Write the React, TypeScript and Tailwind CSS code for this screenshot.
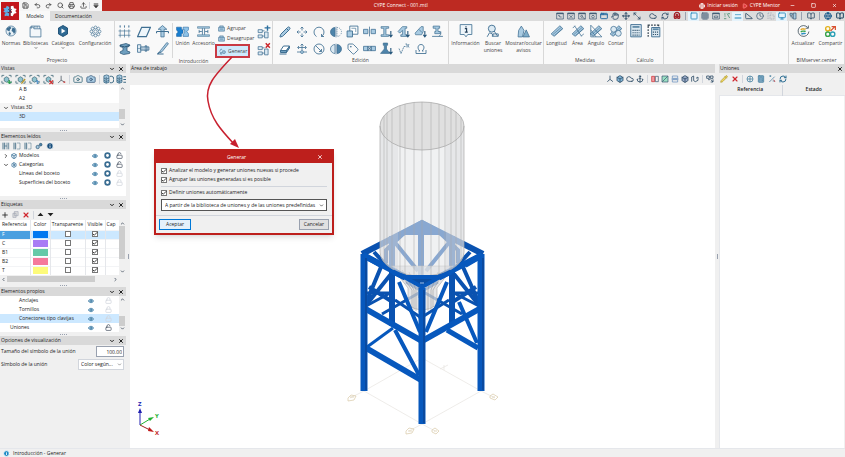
import { useState } from "react";
import type { ReactNode } from "react";
import {
  AppWindow, Anchor, BookOpen, Box, Calculator, Camera, Check, ChevronDown,
  ChevronRight, ChevronUp, Clock, Cloud, Eye, Globe, Grid3x3, Hand, Info, Lock,
  LockOpen, Magnet, Maximize2, Minus, Monitor, Move, Pencil, Play, Plus, Printer,
  RefreshCw, Save, Search, Settings, Square, Tag, TriangleRight,
  Undo2, Redo2, Upload, X,
} from "lucide-react";

type SvgProps = { className?: string; children: ReactNode };

const Svg = ({ className = "size-3", children }: SvgProps) => (
  <svg
    viewBox="0 0 24 24"
    className={`shrink-0 ${className}`}
    fill="none"
    stroke="currentColor"
    strokeWidth="2"
    aria-hidden="true"
  >
    {children}
  </svg>
);

const LIGHT = "#a9cbe2";

/* ---------- ribbon drawings ---------- */

const AppLogo = () => (
  <Svg className="size-[16px]">
    <path d="M2 8l4-1 1-3 4 2v4l1 2-1 2-3-1-2 2-4-2 2-2z M4 16l4-2 3 2-1 4-3-1-3 1z" fill="#5cb0e8" stroke="none" />
    <path d="M13 5l4-1 1 4 4 1-2 3 2 3-4 1-2 4-3-1v-4l2-2-2-3z" fill="#fff" stroke="none" />
    <path d="M12 4v16M9 9l6 6M15 9l-6 6" stroke="#1d3a5c" strokeWidth="1" />
  </Svg>
);

const UnionIcon = () => (
  <Svg className="size-[13px]">
    <path d="M1 4h9v4l3 1v6l-3 1v5H1v-5l3-3-3-4z" fill="#1a7fd0" stroke="#1a5f9c" strokeWidth="1" />
    <path d="M13 4h10v5l-3 3 3 4v5H13v-4l3-2V9l-3-1z" fill="#8fc3e8" stroke="#1a5f9c" strokeWidth="1" />
  </Svg>
);

const AccessoryIcon = () => (
  <Svg className="size-[13px]">
    <path d="M1 3h22v3H1z M1 18h22v3H1z" fill={LIGHT} strokeWidth="1" />
    <path d="M10 6v12M14 6v12M4 9v6M20 9v6M4 12h5M15 12h5" strokeWidth="1.5" />
  </Svg>
);

const FolderIcon = () => (
  <Svg className="size-[13px]">
    <path d="M2 4h6l1 3h13v15H2z M4 7V2h16v5" strokeWidth="1.4" fill="#f3f7fa" />
    <path d="M10 2v4M13 2v4M16 2v4" strokeWidth="1" />
  </Svg>
);

const CatalogIcon = () => (
  <Svg className="size-[12px]">
    <path d="M12 1l9 5v12l-9 5-9-5V6z" fill="#2f6a94" stroke="#24557a" />
    <path d="M9 7l8 5-8 5z" fill="#fff" stroke="none" />
  </Svg>
);

const GlobeIcon = () => (
  <Svg className="size-[12px]">
    <circle cx="12" cy="12" r="10" fill="#e8f1f7" strokeWidth="1.4" />
    <path d="M4 6l6-3 3 3-3 3-1 4-4-2-2-2z M8 14l4 2-2 5-3-3z M15 5l5 2 1 6-3 5-2-4-3-2z" fill="currentColor" stroke="none" />
  </Svg>
);

const GearFlower = () => (
  <Svg className="size-[13px]">
    <circle cx="12" cy="12" r="3" strokeWidth="1.2" />
    {[0, 45, 90, 135, 180, 225, 270, 315].map((a) => (
      <circle key={a} cx="12" cy="4.5" r="2.6" strokeWidth="1.2" transform={`rotate(${a} 12 12)`} />
    ))}
  </Svg>
);

const GridIcon = () => (
  <Svg className="size-[13px]">
    <path d="M4 8v15M12 8v15M20 8v15M1 11h22M1 19h22" strokeWidth="1.2" />
    <path d="M3 2h2M11 2h2M19 2h2M4 1v4M12 1v4M20 1v4" strokeWidth="1.4" />
  </Svg>
);

const PlaneIcon = () => (
  <Svg className="size-[14px]">
    <path d="M8 4h15l-7 16H1z" fill="#eef6fb" strokeWidth="2" />
  </Svg>
);

const ColumnArrow = () => (
  <Svg className="size-[13px]">
    <path d="M12 1l8 7h-5v14h-6V8H4z" fill={LIGHT} strokeWidth="1.4" />
    <path d="M1 12h22M1 12v3M23 12v3" />
  </Svg>
);

const BeamIcon = () => (
  <Svg className="size-[12px]">
    <path d="M2 4l12-3 8 3-2 3-4 1v8l6 2-1 3-12 2-7-3 1-3 5-2V9L2 7z" fill="#6f9fbf" stroke="#2c5675" strokeWidth="1.5" />
    <path d="M2 5l9 3 10-3" stroke="#2c5675" />
  </Svg>
);

const BoltIcon = () => (
  <Svg className="size-[13px]">
    <path d="M1 5h6v14H1z M7 9h15v6H7z M15 7h3v10h-3z" fill="#e2edf5" strokeWidth="1.5" />
    <path d="M1 12h6M11 9v6M20 9v6" strokeWidth="1" />
  </Svg>
);

const PenCorner = () => (
  <Svg className="size-[13px]">
    <path d="M20 1l3 2-12 15-4 2 1-4z" fill={LIGHT} strokeWidth="1.4" />
    <path d="M2 22h12M3 22l4-4" />
  </Svg>
);

const TinyGroup = () => (
  <Svg className="size-[7px] text-[#3f6f92]">
    <path d="M2 8h20v13H2z M6 8V3h12v5 M7 14h10" fill={LIGHT} />
  </Svg>
);

const GenerateIcon = () => (
  <Svg className="size-[7px] text-[#3f6f92]">
    <path d="M2 12l5-9 5 5M5 15h5v6H5z" />
    <circle cx="17" cy="14" r="5" fill={LIGHT} />
  </Svg>
);

const JointIcon = ({ remove = false }: { remove?: boolean }) => (
  <Svg className="size-[14px]">
    <path d="M2 8h7v5H2z M2 17h7v5H2z M13 12h6v10h-6z M9 10h4M9 19h4" fill="#dceaf3" strokeWidth="1.3" />
    {remove ? (
      <path d="M15 2l7 8M22 2l-7 8" stroke="#c9252b" strokeWidth="2.4" />
    ) : (
      <path d="M18 1v9M13 5h10" stroke="#2c6f9e" strokeWidth="2.4" />
    )}
  </Svg>
);

const EraserIcon = () => (
  <Svg className="size-[12px]">
    <path d="M9 6h12l-6 9H3z" fill="#fff" />
    <path d="M3 15h12v4H3z M15 15l6-9v4l-6 9z" fill="#6f9fbf" />
    <path d="M1 22h14" />
  </Svg>
);

const MoveIcon = () => (
  <Svg className="size-[12px]">
    <path d="M12 9V2M9 5l3-3 3 3M12 15v7M9 19l3 3 3-3M9 12H2M5 9l-3 3 3 3M15 12h7M19 9l3 3-3 3" strokeWidth="1.6" />
  </Svg>
);

const MoveNode = () => (
  <Svg className="size-[12px]">
    <path d="M12 14V2M9 5l3-3 3 3M12 9H4M6 6L3 9l3 3M12 9h8M18 6l3 3-3 3M2 18h7M15 18h7" strokeWidth="1.6" />
    <circle cx="12" cy="18" r="3" fill={LIGHT} strokeWidth="1.4" />
  </Svg>
);

const RotateIcon = () => (
  <Svg className="size-[12px]">
    <path d="M7 21a10 10 0 1 1 10 0M17 16v5h5" strokeWidth="1.7" />
  </Svg>
);

const RadiusIcon = () => (
  <Svg className="size-[12px]">
    <circle cx="12" cy="12" r="10" strokeWidth="1.7" />
    <path d="M5 5l12 12M17 12v5h-5" strokeWidth="1.7" />
  </Svg>
);

const MirrorIcon = ({ dashed = false }: { dashed?: boolean }) => (
  <Svg className="size-[12px]">
    <path d="M10 3a9 9 0 0 0 0 18z" fill={dashed ? "#4e84aa" : "#dceaf3"} strokeWidth="1.4" />
    <path d="M14 3a9 9 0 0 1 0 18z" fill={dashed ? "none" : "#4e84aa"} strokeWidth="1.4" strokeDasharray={dashed ? "2 2" : undefined} />
    <path d="M12 1v22" strokeWidth="1" />
  </Svg>
);

const CopyIcon = () => (
  <Svg className="size-[13px]">
    <path d="M7 2h15v15H7z" fill="#fff" strokeWidth="1.6" />
    <path d="M2 11h10v11H2z" fill={LIGHT} strokeWidth="1.6" />
    <path d="M10 6h8v7" strokeWidth="1.2" />
  </Svg>
);

const SplitIcon = ({ joined = false }: { joined?: boolean }) => (
  <Svg className="size-[13px]">
    <path d="M1 8h8v8H1z M15 8h8v8h-8z" fill={LIGHT} strokeWidth="1.4" />
    <path d={joined ? "M9 8h6v8H9zM9 8l6 8M15 8l-6 8" : "M12 3v18"} strokeWidth="1.4" />
  </Svg>
);

const ProfileIcon = ({ variant = 0 }: { variant?: number }) => (
  <Svg className="size-[13px]">
    {variant === 0 && <path d="M2 3h14v3h-5v12h5v3H2v-3h5V6H2z" fill={LIGHT} strokeWidth="1.3" />}
    {variant === 1 && <path d="M2 12l8-9h8v3h-3v12h3v3H7v-3h3v-8l-5 5z" fill={LIGHT} strokeWidth="1.3" />}
    {variant === 2 && <path d="M2 15L13 3h4v9l-3 6H3z M9 8l6 6" fill={LIGHT} strokeWidth="1.3" />}
    {variant === 3 && <path d="M4 2h12v4h-3v6h4v4H7v-4h2V6H4z" fill={LIGHT} strokeWidth="1.3" />}
    {variant === 4 && <path d="M6 2h8v4h-2v7l6 8H1l7-8V6H6z" fill="#4e84aa" strokeWidth="1.3" />}
    {variant === 3 ? (
      <path d="M2 21h20M18 12v5l-3 4" strokeWidth="1.5" />
    ) : (
      <path d="M20 11v11M17 18l3 4 3-4" stroke="#24557a" strokeWidth="2" />
    )}
  </Svg>
);

const WeldIcon = () => (
  <Svg className="size-[12px]">
    <path d="M2 11l4 10 6-14h3" strokeWidth="1.5" strokeDasharray="4 1" />
    <path d="M15 2h3v7M22 2l-2 4 2 3" strokeWidth="1.5" />
  </Svg>
);

const OmegaIcon = () => (
  <Svg className="size-[12px]">
    <path d="M2 14v7h20v-7M7 16h3c-6-4-5-13 2-13s8 9 2 13h3" strokeWidth="1.7" />
  </Svg>
);

const InfoBubble = () => (
  <Svg className="size-[14px]">
    <path d="M2 1h20v17h-7l-3 4-3-4H2z" strokeWidth="1.4" fill="#eef5fa" />
    <path d="M10 8h3v6M10 14h5M11 5h2" stroke="#24405a" strokeWidth="2" />
  </Svg>
);

const FindIcon = () => (
  <Svg className="size-[14px]">
    <circle cx="10" cy="8" r="6" fill="#dceaf3" strokeWidth="1.6" />
    <path d="M14 12l6 9M2 22l4-7 5 2v5M12 17h9v4h-9z" strokeWidth="1.5" />
  </Svg>
);

const WarnIcon = () => (
  <Svg className="size-[13px]">
    <path d="M8 2l5 8-3 12H2l1-12z" fill={LIGHT} strokeWidth="1.4" />
    <path d="M17 9l6 13H11z" fill="#7fadc9" strokeWidth="1.4" />
  </Svg>
);

const RulerIcon = ({ variant }: { variant: number }) => (
  <Svg className="size-[14px]">
    <path d="M2 17L17 3l5 5L7 21z" fill={LIGHT} strokeWidth="1.3" />
    <path d="M5 18L19 6M8 20L21 8" strokeWidth="1" />
    {variant === 1 && <path d="M6 3l12 18M3 7l4-4M17 21l5-4" strokeWidth="1.3" />}
    {variant === 2 && <path d="M3 2v20h19zM3 10l9 12" strokeWidth="1.3" />}
    {variant === 3 && (
      <>
        <circle cx="8" cy="9" r="5" fill="#dceaf3" strokeWidth="1.3" />
        <circle cx="16" cy="16" r="5" fill="#dceaf3" strokeWidth="1.3" />
      </>
    )}
  </Svg>
);

const CalcIcon = ({ frame = false }: { frame?: boolean }) => (
  <Svg className="size-[14px]">
    {frame && <path d="M2 4v18M2 2h18M2 1v3M20 1v3" stroke="#33414d" strokeDasharray="3 2" />}
    <path d={frame ? "M8 6h14v16H8z" : "M3 1h18v21H3z"} fill="#dbe8f1" strokeWidth="1.6" />
    <path d={frame ? "M10 9h10" : "M6 5h12"} stroke="#5c88a6" strokeWidth="3" />
    <path d={frame ? "M10 14h10M10 18h10" : "M6 11h12M6 15h12M6 19h12"} stroke="#33556e" strokeDasharray="2 1.5" />
  </Svg>
);

const SyncColor = () => (
  <Svg className="size-[13px]">
    <path d="M20 5A10 10 0 1 0 22 12M21 1v5h-5" stroke="#3d4d59" strokeWidth="1.5" />
    <path d="M7 9c3-4 6 0 9-2" stroke="#e3a21a" strokeWidth="2.5" />
    <path d="M7 13c3-4 6 0 9-2" stroke="#37a34a" strokeWidth="2.5" />
    <path d="M8 17c3-3 6 0 8-2" stroke="#2a8fc4" strokeWidth="2.5" />
  </Svg>
);

const ShareColor = () => (
  <Svg className="size-[13px]">
    <circle cx="7" cy="7" r="4" stroke="#e3b01a" strokeWidth="2.5" />
    <circle cx="7" cy="17" r="4" stroke="#37a34a" strokeWidth="2.5" />
    <circle cx="16" cy="17" r="4" stroke="#2a9fb4" strokeWidth="2.5" />
    <path d="M12 11l8-8M14 3h7v6" stroke="#d8502f" strokeWidth="2.2" />
  </Svg>
);

/* ---------- panel drawings ---------- */

const ViewIcon = ({ badge }: { badge: string }) => (
  <Svg className="size-[11px] text-[#35606f]">
    <path d="M2 7V3h5M17 3h5v4M22 15v5h-4M7 20H2v-5" strokeWidth="1.6" />
    <path d="M7 9l5-3 5 3v6l-5 3-5-3z" fill="#8fc3cf" strokeWidth="1.4" />
    {badge === "add" && <path d="M18 13v9M14 18h9" stroke="#22a04a" strokeWidth="2.6" />}
    {badge === "edit" && <path d="M22 11l-8 10" stroke="#b3962a" strokeWidth="3" />}
    {badge === "up" && <path d="M18 22v-7M15 17l3-3 3 3" stroke="#2c7bc0" strokeWidth="2" />}
    {badge === "del" && <path d="M14 14l8 8M22 14l-8 8" stroke="#d42a2a" strokeWidth="2.6" />}
  </Svg>
);

const AxesIcon = () => (
  <Svg className="size-[9px] text-[#44535e]">
    <path d="M11 2v12L3 21M11 14l10 5" strokeWidth="2" />
    <path d="M17 19h5" stroke="#d42a2a" strokeWidth="3" />
  </Svg>
);

const LayersIcon = () => (
  <Svg className="size-[11px] text-[#2f5f7c]">
    <path d="M2 4l6-2 5 2v14l-6 2-5-2zM2 9l5 2 6-2M2 14l5 2 6-2M7 6v14" strokeWidth="1.6" fill={LIGHT} />
    <path d="M15 5h4a4 6 0 0 1 0 14h-4" />
  </Svg>
);

const LayersListIcon = () => (
  <Svg className="size-[11px] text-[#2f5f7c]">
    <path d="M2 4l6-2 5 2v14l-6 2-5-2zM2 9l5 2 6-2M2 14l5 2 6-2M7 6v14" strokeWidth="1.6" fill={LIGHT} />
    <path d="M16 6h6M16 12h6M16 18h6" />
  </Svg>
);

const ReadIcon = ({ arrow = false }: { arrow?: boolean }) => (
  <Svg className="size-[8px] text-[#33607c]">
    <path d="M3 2v20M8 2v20" strokeWidth="2.5" />
    <path d={arrow ? "M13 3h8v18h-8" : "M15 2v20M20 2v20M8 12h7"} strokeDasharray={arrow ? "4 2" : undefined} />
  </Svg>
);

const LinkIcon = () => (
  <Svg className="size-[8px] text-[#234f6e]">
    <circle cx="8" cy="15" r="5" fill={LIGHT} />
    <circle cx="17" cy="8" r="4" fill="#4e84aa" />
  </Svg>
);

const Ring = () => (
  <Svg className="size-[7px] text-[#3a6d92]">
    <circle cx="12" cy="12" r="8" strokeWidth="6" fill="#fff" />
  </Svg>
);

const PanelHead = ({ title, closeOnly = false }: { title: string; closeOnly?: boolean }) => (
  <div className="flex h-[9px] shrink-0 items-center bg-[#d9d9d9] pl-px pr-px">
    <h2 className="flex-1 truncate">{title}</h2>
    {!closeOnly && (
      <button aria-label={`Contraer ${title}`} className="px-[2px]">
        <ChevronDown className="size-[6px]" strokeWidth={4} />
      </button>
    )}
    <button aria-label={`Cerrar ${title}`} className="px-px">
      <X className="size-[6px]" strokeWidth={4} />
    </button>
  </div>
);

const Dots = () => (
  <div className="flex h-[4px] shrink-0 items-center justify-center gap-px">
    {[0, 1, 2, 3].map((i) => (
      <span key={i} className="size-px bg-gray-400" />
    ))}
  </div>
);

const VScroll = ({ thumb, size = "h-[10px]" }: { thumb: string; size?: string }) => (
  <div className="flex w-[7px] shrink-0 flex-col items-center bg-[#f0f0f0] py-px text-gray-600">
    <ChevronUp className="size-[5px]" strokeWidth={4} />
    <div className={`flex flex-1 flex-col self-stretch ${thumb}`}>
      <span className={`w-[6px] bg-[#cdcdcd] ${size}`} />
    </div>
    <ChevronDown className="size-[5px]" strokeWidth={4} />
  </div>
);

const Tick = ({ on = true, label }: { on?: boolean; label?: string }) => {
  const [checked, setChecked] = useState(on);
  return (
    <label className="inline-flex items-center gap-[2px]">
      <span className="relative inline-flex size-[6px]">
        <input
          type="checkbox"
          aria-label={label ? undefined : "Activar"}
          checked={checked}
          onChange={(e) => setChecked(e.target.checked)}
          className="size-[6px] appearance-none border border-[#777] bg-white"
        />
        {checked && (
          <Check className="pointer-events-none absolute inset-0 size-[6px] text-black" strokeWidth={3} />
        )}
      </span>
      {label}
    </label>
  );
};

const TreeRow = ({
  name, pad, active = false, children,
}: { name: ReactNode; pad: string; active?: boolean; children?: ReactNode }) => (
  <li className={`flex h-[9px] items-center ${pad} ${active ? "bg-[#cce8ff]" : ""}`}>
    <span className="flex flex-1 items-center gap-[2px] whitespace-nowrap">{name}</span>
    {children}
  </li>
);

const EyeLock = ({ ring = false, open = false }: { ring?: boolean; open?: boolean }) => (
  <span className="flex items-center">
    <span className="flex w-[12px] justify-center">
      <Eye className="size-[6px] text-[#3f7aa0]" fill={LIGHT} strokeWidth={3} />
    </span>
    {ring && (
      <span className="flex w-[12px] justify-center">
        <Ring />
      </span>
    )}
    <span className={`flex justify-center ${ring ? "w-[13px]" : "w-[22px]"}`}>
      {open ? (
        <LockOpen className="size-[7px] text-gray-600" strokeWidth={2.5} />
      ) : (
        <Lock className="size-[7px] text-gray-300" strokeWidth={2.5} />
      )}
    </span>
  </span>
);

/* ---------- ribbon pieces ---------- */

const BigButton = ({
  icon, label, width, caret = false,
}: { icon: ReactNode; label: string; width: string; caret?: boolean }) => (
  <button className={`flex shrink-0 flex-col items-center ${width}`}>
    <span className="flex h-[16px] items-center text-[#3f6f92]">{icon}</span>
    <span className="mt-px whitespace-pre text-center leading-[7px]">{label}</span>
    {caret && <ChevronDown className="-mt-px size-[4px]" strokeWidth={4} />}
  </button>
);

const Group = ({
  title = "", width, children, className = "",
}: { title?: string; width: string; children: ReactNode; className?: string }) => (
  <section className={`flex shrink-0 flex-col border-r border-[#d8d8d8] ${width} ${className}`}>
    <div className="flex flex-1 pt-[2px]">{children}</div>
    <h3 className="h-[7px] text-center leading-[7px]">{title}</h3>
  </section>
);

const editTools: ReactNode[] = [
  <Pencil className="size-[12px]" fill={LIGHT} strokeWidth={2} />,
  <MoveIcon />, <RotateIcon />, <MirrorIcon dashed />, <CopyIcon />, <SplitIcon />,
  <ProfileIcon />, <ProfileIcon variant={1} />, <ProfileIcon variant={2} />, <ProfileIcon variant={3} />,
  <EraserIcon />, <MoveNode />, <RadiusIcon />, <MirrorIcon />,
  <Tag className="size-[12px]" strokeWidth={1.7} />,
  <SplitIcon joined />, <ProfileIcon variant={4} />, <WeldIcon />, <OmegaIcon />,
];

const ZoomWindow = ({ d }: { d: string }) => (
  <Svg className="size-[8px]">
    <path d="M2 3h20v18H2z" />
    <path d="M2 5h20" strokeWidth="3" />
    <path d={d} />
  </Svg>
);

const viewTools: ReactNode[] = [
  <ZoomWindow d="M6 11h5v4M11 15h6" />,
  <ZoomWindow d="M7 10l10 8M17 10l-10 8" />,
  <ZoomWindow d="M13 14l8 8M8 13a3 3 0 1 0 6 0 3 3 0 1 0-6 0" />,
  <ZoomWindow d="M8 14a4 4 0 1 0 8 0 4 4 0 1 0-8 0" />,
  <AppWindow className="size-[8px] text-[#2c6fa3]" strokeWidth={3} />,
  <Hand className="size-[8px]" strokeWidth={2.5} />,
  <Move className="size-[8px]" strokeWidth={3} />,
  <Maximize2 className="size-[8px] -scale-x-100" strokeWidth={2.5} />,
];

const snapTools: { icon: ReactNode; on?: boolean }[] = [
  { icon: <Square className="size-[8px]" strokeWidth={2.5} />, on: true },
  { icon: <Grid3x3 className="size-[8px]" strokeWidth={2} /> },
  { icon: <ZoomWindow d="M7 12h10v5H7z" /> },
  { icon: <Svg className="size-[8px] text-[#2f7d5c]"><path d="M3 6h5M12 4l8 14M4 12h4M3 20h7M15 5h6" /></Svg> },
  { icon: <Svg className="size-[8px]"><path d="M2 18h20M4 8h4M10 8h4M16 8h4" strokeWidth="3" /></Svg>, on: true },
  { icon: <TriangleRight className="size-[8px] -scale-x-100" strokeWidth={2.5} /> },
  { icon: <Clock className="size-[8px]" strokeWidth={2} /> },
  { icon: <Svg className="size-[8px] text-gray-400"><path d="M3 3h12M3 3v18M9 9h12v12H9z" strokeDasharray="3 2" /></Svg> },
  { icon: <Monitor className="size-[8px]" strokeWidth={2.5} />, on: true },
  { icon: <Svg className="size-[8px]"><path d="M3 4h7v6H3zM13 3h8v18h-8zM4 14h6v6" fill={LIGHT} /></Svg> },
];

const quickTools = [Save, Undo2, Redo2, Search, Printer, Upload];

const TitleBar = () => (
  <header className="flex h-[21px] shrink-0">
    <div className="flex w-[20px] items-center justify-center bg-[#f5f5f5]">
      <div className="flex size-[18px] items-center justify-center bg-[#c3161c]">
        <AppLogo />
      </div>
    </div>
    <div className="flex flex-1 flex-col">
      <div className="flex h-[11px]">
        <div className="flex w-[82px] items-center bg-[#f5f5f5] text-[#3a3a3a]">
          <div className="flex flex-1">
            {quickTools.map((Tool, i) => (
              <button key={i} aria-label="Acceso rápido" className="flex flex-1 justify-center">
                <Tool className="size-[7px]" strokeWidth={2.5} />
              </button>
            ))}
          </div>
          <span className="h-[7px] w-px bg-gray-300" />
          <button aria-label="Personalizar" className="px-[3px]">
            <Svg className="size-[6px]">
              <path d="M3 4h18" strokeWidth="4" />
              <path d="M3 10h18l-9 10z" fill="currentColor" />
            </Svg>
          </button>
        </div>
        <div className="flex flex-1 items-center bg-[#bd2a22] text-white">
          <h1 className="flex-1 text-center">CYPE Connect - 001.mtl</h1>
          <a href="#sesion" className="flex items-center gap-[2px]">
            <Globe className="size-[6px]" strokeWidth={3} /> Iniciar sesión
          </a>
          <a href="#mentor" className="ml-[4px] flex items-center gap-[2px]">
            <Play className="size-[6px] text-[#ff8a80]" fill="#e0393e" strokeWidth={3} /> CYPE Mentor
          </a>
          <div className="ml-[2px] flex">
            {[Minus, Square, X].map((Ctl, i) => (
              <button key={i} aria-label="Ventana" className="flex w-[21px] justify-center">
                <Ctl className="size-[5px]" strokeWidth={3} />
              </button>
            ))}
          </div>
        </div>
      </div>
      <nav className="flex h-[10px] items-center bg-[#dcdcdc]">
        <a href="#modelo" className="flex h-full w-[30px] items-center justify-center bg-[#f9f9f9]">
          Modelo
        </a>
        <a href="#documentacion" className="px-[5px]">Documentación</a>
        <div className="ml-auto flex items-center text-[#33506a]">
          {viewTools.map((tool, i) => (
            <button key={i} aria-label="Vista" className="flex w-[11px] justify-center">{tool}</button>
          ))}
          <button aria-label="Capas" className="ml-[5px] flex w-[12px] justify-center">
            <Cloud className="size-[8px]" strokeWidth={2.5} />
          </button>
          <button aria-label="Refrescar" className="flex w-[12px] justify-center">
            <RefreshCw className="size-[8px]" strokeWidth={2.5} />
          </button>
          <button aria-label="Imán" className="flex w-[12px] justify-center">
            <Magnet className="size-[8px] -rotate-45 text-[#a3242a]" strokeWidth={4} />
          </button>
          <span className="mx-[2px] h-[8px] w-px bg-gray-400" />
          {snapTools.map((tool, i) => (
            <button
              key={i}
              aria-label="Referencia"
              className={`flex h-[9px] w-[11px] items-center justify-center ${tool.on ? "bg-[#e6f3fb] text-[#2385b8]" : ""}`}
            >
              {tool.icon}
            </button>
          ))}
          <span className="mx-[3px] h-[8px] w-px bg-gray-400" />
          <button aria-label="Ayuda" className="flex w-[12px] justify-center">
            <BookOpen className="size-[8px]" strokeWidth={2.5} />
          </button>
          <span className="mx-[2px] h-[8px] w-px bg-gray-400" />
          <button aria-label="Web" className="flex w-[12px] justify-center">
            <Globe className="size-[8px] text-[#1d5c8c]" strokeWidth={3} />
          </button>
          <button aria-label="Manual" className="flex w-[11px] justify-center">
            <BookOpen className="size-[8px] text-[#17405f]" strokeWidth={3} />
          </button>
        </div>
      </nav>
    </div>
  </header>
);

const Ribbon = () => (
  <div className="flex h-[43px] shrink-0 bg-[#f9f9f9] text-[#444]">
    <Group title="Proyecto" width="w-[115px]">
      <BigButton icon={<GlobeIcon />} label="Normas" width="w-[22px]" />
      <BigButton icon={<FolderIcon />} label="Bibliotecas" width="w-[27px]" caret />
      <BigButton icon={<CatalogIcon />} label="Catálogos" width="w-[28px]" caret />
      <BigButton icon={<GearFlower />} label="Configuración" width="w-[36px]" />
    </Group>
    <Group title="Introducción" width="w-[158px]">
      <div className="grid w-[58px] shrink-0 grid-cols-3 grid-rows-[17px_17px] items-center justify-items-center border-r border-[#d8d8d8] text-[#3f6f92]">
        <button aria-label="Rejilla"><GridIcon /></button>
        <button aria-label="Plano"><PlaneIcon /></button>
        <button aria-label="Pilar"><ColumnArrow /></button>
        <button aria-label="Perfil"><BeamIcon /></button>
        <button aria-label="Tornillo"><BoltIcon /></button>
        <button aria-label="Soldadura"><PenCorner /></button>
      </div>
      <BigButton icon={<UnionIcon />} label="Unión" width="w-[19px]" />
      <BigButton icon={<AccessoryIcon />} label="Accesorio" width="w-[23px]" />
      <div className="flex w-[40px] shrink-0 flex-col items-start">
        <button className="ml-[3px] flex h-[10px] items-center gap-[2px]"><TinyGroup />Agrupar</button>
        <button className="ml-[3px] flex h-[11px] items-center gap-[2px]"><TinyGroup />Desagrupar</button>
        <button className="flex h-[14px] w-[35px] items-center gap-[2px] border-2 border-[#c93a44] bg-[#cfeafc] px-[2px]">
          <GenerateIcon />Generar
        </button>
      </div>
      <div className="grid grid-rows-[17px_17px] items-center pl-[2px] text-[#3f6f92]">
        <button aria-label="Añadir a la unión"><JointIcon /></button>
        <button aria-label="Quitar de la unión"><JointIcon remove /></button>
      </div>
    </Group>
    <Group title="Edición" width="w-[176px]">
      <div className="grid grid-cols-[repeat(10,17px)] grid-rows-[17px_17px] items-center justify-items-center pl-[3px] text-[#3f6f92]">
        {editTools.map((tool, i) => (
          <button key={i} aria-label="Herramienta de edición">{tool}</button>
        ))}
      </div>
    </Group>
    <Group width="w-[95px]">
      <BigButton icon={<InfoBubble />} label="Información" width="w-[33px]" />
      <BigButton icon={<FindIcon />} label={"Buscar\nuniones"} width="w-[22px]" />
      <BigButton icon={<WarnIcon />} label={"Mostrar/ocultar\navisos"} width="w-[39px]" />
    </Group>
    <Group title="Medidas" width="w-[83px]">
      <BigButton icon={<RulerIcon variant={0} />} label="Longitud" width="w-[25px]" />
      <BigButton icon={<RulerIcon variant={1} />} label="Área" width="w-[17px]" />
      <BigButton icon={<RulerIcon variant={2} />} label="Ángulo" width="w-[20px]" />
      <BigButton icon={<RulerIcon variant={3} />} label="Contar" width="w-[20px]" />
    </Group>
    <Group title="Cálculo" width="w-[37px]">
      <BigButton icon={<CalcIcon />} label="" width="w-[18px]" />
      <BigButton icon={<CalcIcon frame />} label="" width="w-[17px]" />
    </Group>
    <div className="flex-1 border-r border-[#d8d8d8]" />
    <Group title="BIMserver.center" width="w-[56px]">
      <BigButton icon={<SyncColor />} label="Actualizar" width="w-[28px]" />
      <BigButton icon={<ShareColor />} label="Compartir" width="w-[27px]" />
    </Group>
  </div>
);

/* ---------- left side ---------- */

const labels = [
  { ref: "F", color: "bg-[#0078f0]", active: true },
  { ref: "C", color: "bg-[#a97cf5]" },
  { ref: "B1", color: "bg-[#66c9a8]" },
  { ref: "B2", color: "bg-[#f5799b]" },
  { ref: "T", color: "bg-[#fdfb7a]" },
];

const LeftSide = () => (
  <aside className="flex w-[126px] shrink-0 flex-col bg-[#f0f0f0]">
    <PanelHead title="Vistas" />
    <div className="flex h-[12px] items-center gap-[3px] pl-px">
      <ViewIcon badge="add" />
      <ViewIcon badge="edit" />
      <ViewIcon badge="up" />
      <ViewIcon badge="del" />
      <AxesIcon />
      <span className="h-[9px] w-px bg-gray-300" />
      <Camera className="size-[10px] shrink-0 text-[#3f6f7f]" />
      <Camera className="size-[10px] shrink-0 text-[#3f5f7f]" fill={LIGHT} />
      <span className="h-[9px] w-px bg-gray-300" />
      <div className="flex gap-[2px] overflow-hidden">
        <LayersIcon />
        <LayersListIcon />
      </div>
    </div>
    <div className="flex h-[43px] bg-white">
      <ul className="flex-1">
        <TreeRow name="A B" pad="pl-[19px]" />
        <TreeRow name="A2" pad="pl-[19px]" />
        <li className="bg-[#f5f5f5]">
          <ul>
            <TreeRow name={<><ChevronDown className="size-[6px]" strokeWidth={3} />Vistas 3D</>} pad="pl-[3px]" />
          </ul>
        </li>
        <TreeRow name="3D" pad="pl-[19px]" active />
      </ul>
      <VScroll thumb="justify-end pb-[3px]" />
    </div>
    <Dots />

    <PanelHead title="Elementos leídos" />
    <div className="flex h-[10px] items-center gap-[3px] pl-[2px]">
      <ReadIcon />
      <ReadIcon arrow />
      <ReadIcon arrow />
      <LinkIcon />
      <Info className="size-[8px] text-white" fill="#174e7c" strokeWidth={2.5} />
    </div>
    <ul className="h-[45px] bg-white">
      <TreeRow
        name={<><ChevronRight className="size-[6px]" strokeWidth={3} /><Box className="size-[6px] text-[#2f6a94]" strokeWidth={3} />Modelos</>}
        pad="pl-[3px]"
      >
        <EyeLock ring open />
      </TreeRow>
      <TreeRow
        name={<><ChevronDown className="size-[6px]" strokeWidth={3} /><Settings className="size-[6px] text-[#2f6a94]" strokeWidth={3} />Categorías</>}
        pad="pl-[3px]"
      >
        <EyeLock ring open />
      </TreeRow>
      <TreeRow name="Líneas del boceto" pad="pl-[19px]"><EyeLock ring /></TreeRow>
      <TreeRow name="Superficies del boceto" pad="pl-[19px]"><EyeLock ring /></TreeRow>
    </ul>
    <Dots />

    <PanelHead title="Etiquetas" />
    <div className="flex h-[11px] items-center gap-[3px] pl-px">
      <Plus className="size-[8px]" strokeWidth={2.5} />
      <Svg className="size-[7px] text-gray-400">
        <path d="M8 2h13v14H8zM3 8h11v14H3z" fill="#ddd" />
      </Svg>
      <X className="size-[8px] text-[#d0282e]" strokeWidth={3.5} />
      <span className="h-[8px] w-px bg-gray-300" />
      <Svg className="size-[7px]"><path d="M2 17h20L12 6z" fill="currentColor" stroke="none" /></Svg>
      <Svg className="size-[7px]"><path d="M2 7h20L12 18z" fill="currentColor" stroke="none" /></Svg>
    </div>
    <div className="flex bg-white">
      <table className="flex-1 table-fixed border-collapse">
        <thead>
          <tr className="h-[10px]">
            <th className="w-[30px] border-r border-gray-200 pl-[2px] text-left font-normal">Referencia</th>
            <th className="w-[20px] border-r border-gray-200 font-normal">Color</th>
            <th className="w-[35px] border-r border-gray-200 font-normal">Transparente</th>
            <th className="w-[20px] border-r border-gray-200 font-normal">Visible</th>
            <th className="pl-px text-left font-normal">Cap</th>
          </tr>
        </thead>
        <tbody>
          {labels.map((row) => (
            <tr key={row.ref} className={`h-[9px] border-t border-gray-100 ${row.active ? "bg-[#cce8ff]" : ""}`}>
              <td className={`border-r border-gray-200 pl-[2px] ${row.active ? "bg-[#4a9fe0] text-white" : ""}`}>{row.ref}</td>
              <td className="border-r border-gray-200 px-[2px]"><span className={`block h-[7px] ${row.color}`} /></td>
              <td className="border-r border-gray-200 text-center leading-none"><Tick on={false} /></td>
              <td className="border-r border-gray-200 text-center leading-none"><Tick /></td>
              <td />
            </tr>
          ))}
        </tbody>
      </table>
      <VScroll thumb="justify-start" size="h-[33px]" />
    </div>
    <div className="flex h-[8px] items-center px-px text-gray-600">
      <ChevronRight className="size-[5px] rotate-180" strokeWidth={4} />
      <span className="mx-px h-[6px] w-[88px] bg-[#cdcdcd]" />
      <ChevronRight className="ml-auto mr-[7px] size-[5px]" strokeWidth={4} />
    </div>
    <Dots />

    <PanelHead title="Elementos propios" />
    <div className="flex h-[36px] bg-white">
      <ul className="flex-1">
        <TreeRow name="Anclajes" pad="pl-[19px]"><EyeLock /></TreeRow>
        <TreeRow name="Tornillos" pad="pl-[19px]"><EyeLock /></TreeRow>
        <TreeRow name="Conectores tipo clavijas" pad="pl-[19px]" active><EyeLock /></TreeRow>
        <TreeRow name="Uniones" pad="pl-[10px]"><EyeLock open /></TreeRow>
      </ul>
      <VScroll thumb="justify-end" />
    </div>
    <Dots />

    <PanelHead title="Opciones de visualización" />
    <div className="flex flex-col gap-[2px] pl-px pr-[2px] pt-px">
      <label className="flex items-center justify-between">
        Tamaño del símbolo de la unión
        <input defaultValue="100.00" className="h-[11px] w-[28px] border border-gray-400 bg-white pr-px text-right" />
      </label>
      <label className="flex items-center justify-between">
        Símbolo de la unión
        <span className="relative flex items-center">
          <select className="h-[11px] w-[46px] appearance-none border border-gray-300 bg-white pl-[2px]">
            <option>Color según...</option>
          </select>
          <ChevronDown className="pointer-events-none absolute right-[2px] size-[5px]" />
        </span>
      </label>
    </div>
  </aside>
);

/* ---------- 3D view ---------- */

const staves = [384, 387, 392, 400, 405, 414, 422, 431, 439, 445, 451, 456, 461];

const staveEnds = (x: number) => {
  const dy = 24 * Math.sqrt(1 - ((x - 422) / 42) ** 2);
  return { top: 126 - dy, bottom: 252 + dy };
};

const Tower = () => (
  <svg viewBox="342 85 160 363" className="h-[363px] w-[160px]" fill="none" role="img" aria-label="Modelo 3D">
    {/* ground outline and support tags */}
    <g stroke="#e6e4e0" strokeWidth="0.7">
      <path d="M350 398l14-7 58-33 59 33 14 7M364 391l58 33 59-33M422 424l-13 7M422 424l13 7" />
      <path d="M440 369l8-4M444 365v5" />
    </g>
    <g stroke="#d9c9a6" strokeWidth="0.7">
      <path d="M348 398l3-3 5 1-2 4-6 1zM406 431l3-3 5 1-2 4-6 1zM432 430l3-2 4 3-3 3-4-2zM490 396l3-2 5 3-3 3-5-2z" />
      <path d="M350 397h4M408 431h4M434 431h3M492 397h3" />
    </g>

    {/* rear members */}
    <g stroke="#0a52b0">
      <path d="M421 226v72" strokeWidth="6" />
      <path d="M392 236v90M452 236v90" strokeWidth="6" />
      <path d="M366 306l26-14M479 306l-27-14M382 314l56 -32M462 314l-56-32" strokeWidth="3" />
      <path d="M366 293h26M452 293h26" strokeWidth="3" />
      <path d="M366 303l15-36M367 304l24-30M479 303l-16-36M478 304l-24-30M369 287l22 14M476 287l-22 14" strokeWidth="4" />
      <path d="M393 240l25 31M451 240l-25 31" strokeWidth="4" />
      <path d="M395 300l28 19M449 300l-30 19" strokeWidth="3" />
    </g>

    {/* hopper below the tank */}
    <path d="M391 266l17 22v17q14 10 29 0v-17l17-22z" fill="#dcdcde" fillOpacity="0.75" stroke="#999" strokeWidth="0.5" />
    <path d="M396 268l16 22v18M402 270l12 20v20M409 272l7 18v21M416 274l3 16v22M424 275v36M431 274l-3 16v21M438 272l-7 18v20M446 269l-13 21v17" stroke="#8d8d8d" strokeWidth="0.5" />

    {/* top ring, rear half */}
    <path d="M362 254l60-31 61 31" stroke="#0a52b0" strokeWidth="6" />
    <path d="M422 222l-20 11h40z" fill="#0a52b0" stroke="#0a52b0" strokeWidth="4" />
    <path d="M374 252l13 14M470 252l-13 14" stroke="#0a52b0" strokeWidth="4" />
    <path d="M404 233l-18 17v13M440 233l18 17v13" stroke="#0a52b0" strokeWidth="4" />

    {/* front ring beams */}
    <path d="M363 255l42 22M439 277l43-22" stroke="#0758bd" strokeWidth="6" />

    {/* tank */}
    <path d="M380 126v126a42 24 0 0 0 84 0V126z" fill="#e6e7e9" fillOpacity="0.58" />
    <path d="M380 126v126a42 24 0 0 0 18 20V146a42 24 0 0 1-18-20zM464 126v126a42 24 0 0 1-18 20V146a42 24 0 0 0 18-20z" fill="#cfd1d3" fillOpacity="0.3" />
    <ellipse cx="422" cy="126" rx="42" ry="24" fill="#e0e0e0" stroke="#a2a2a2" strokeWidth="0.7" />
    <path d="M380 126v126a42 24 0 0 0 84 0V126" stroke="#a9a9a9" strokeWidth="0.7" />
    {staves.map((x) => (
      <path key={x} d={`M${x} ${staveEnds(x).top}V${staveEnds(x).bottom}`} stroke="#a6a6a6" strokeWidth="0.5" />
    ))}

    {/* front faces */}
    <g stroke="#0758bd">
      <path d="M363 255l18 10M465 265l17-10" strokeWidth="6" />
      <path d="M393 272l12 6M451 272l-12 6" strokeWidth="5" />
      <path d="M404 277h36l-18 10z" fill="#0a4da3" strokeWidth="4" />
      <path d="M364 308l58 33 59-33" strokeWidth="6" />
      <path d="M399 282l21 50M447 282l-21 50" strokeWidth="4" />
      <path d="M366 348l55 32" strokeWidth="6" />
      <path d="M367 347l26-19" strokeWidth="3" />
      <path d="M395 330l24 45M459 302l18 41" strokeWidth="4" />
      <path d="M447 330l31 18" strokeWidth="5" />
      <path d="M364 254v137M481 254v137M422 288v136" strokeWidth="7" />
    </g>
    <path d="M366 258v132M483 258v132M424 290v133" stroke="#0a4aa0" strokeWidth="2" />
    <path d="M420 283h4" stroke="#9cc0ec" />
  </svg>
);

const Axes = () => (
  <svg viewBox="0 0 30 36" className="absolute bottom-[12px] left-[4px] h-[36px] w-[30px]" fill="none">
    <path d="M6 25V12" stroke="#2020b0" />
    <path d="M4 13l2-5 2 5z" fill="#2020b0" />
    <path d="M6 25l10-6" stroke="#20b030" />
    <path d="M14 18l6-1-4 4z" fill="#20b030" />
    <path d="M6 25l10 5" stroke="#a02020" />
    <path d="M15 27l5 5-6-1z" fill="#c01818" />
    <text x="4" y="6" className="text-[6px] font-bold" fill="#2020b0">Z</text>
    <text x="21" y="18" className="text-[6px] font-bold" fill="#20b030">Y</text>
    <text x="21" y="35" className="text-[6px] font-bold" fill="#c01818">X</text>
  </svg>
);

const Workspace = () => (
  <main className="flex min-w-0 flex-1 flex-col">
    <h2 className="h-[9px] bg-[#d9d9d9] pl-px leading-[9px]">Área de trabajo</h2>
    <div className="flex h-[12px] items-center justify-end gap-[2px] bg-[#f0f0f0] pr-px text-[#33506a]">
      <Svg className="size-[8px]"><path d="M12 2v11L4 20M12 13l9 7" strokeWidth="2.5" /></Svg>
      <Box className="size-[8px]" fill="#7fb4d6" strokeWidth={2.5} />
      <Cloud className="size-[8px]" strokeWidth={2.5} />
      <Anchor className="size-[8px]" strokeWidth={2.5} />
      <span className="mx-px h-[8px] w-px bg-gray-300" />
      <Svg className="size-[8px]">
        <path d="M2 4h9v16H2z" fill="#f39aa0" stroke="#c9252b" />
        <path d="M13 4h9v16h-9z" />
      </Svg>
      <Svg className="size-[8px]"><path d="M3 3h18v18H3z" fill="#9be0c4" /><path d="M4 20L20 4" /></Svg>
      <Svg className="size-[8px]"><path d="M4 3h16v7H4zM4 14h16v7H4zM1 12h22" stroke="#5c86b8" /></Svg>
      <Box className="size-[8px]" fill="#9aa9c6" strokeWidth={2.5} />
      <Svg className="size-[8px]"><path d="M2 20V6l6-3v14l5 3 8-4V6l-6 4" strokeWidth="2.5" /></Svg>
      <span className="mx-px h-[8px] w-px bg-gray-300" />
      <Svg className="size-[8px]"><path d="M2 3h8v7H2zM13 3h8v7h-8zM6 14h6M14 13l7 8M21 13v8h-7" strokeWidth="2.5" /></Svg>
    </div>
    <div className="relative flex flex-1 justify-center bg-white pr-[2px]">
      <Tower />
      <Axes />
    </div>
  </main>
);

const Joints = () => (
  <aside className="flex w-[126px] shrink-0 flex-col bg-[#f0f0f0]">
    <PanelHead title="Uniones" closeOnly />
    <div className="flex h-[12px] items-center gap-[3px] pl-px text-[#2f6f94]">
      <Pencil className="size-[8px] text-[#a8912a]" fill="#f0d860" />
      <X className="size-[8px] text-[#d0282e]" strokeWidth={3.5} />
      <span className="h-[8px] w-px bg-gray-300" />
      <Svg className="size-[8px]"><circle cx="12" cy="12" r="9" /><path d="M12 3v18M3 12h18" /></Svg>
      <Calculator className="size-[8px]" fill="#8fb4cc" />
      <Svg className="size-[8px]">
        <path d="M4 3h6M7 1v5M4 21L20 5M14 18h7" />
        <path d="M17 14l4 7" stroke="#d0282e" />
      </Svg>
      <RefreshCw className="size-[8px]" strokeWidth={3} />
    </div>
    <table className="w-full table-fixed">
      <thead>
        <tr className="h-[10px] border-b border-gray-200">
          <th className="border-r border-gray-300 font-semibold">Referencia</th>
          <th className="font-semibold">Estado</th>
        </tr>
      </thead>
    </table>
    <div className="mr-px flex-1 border-l border-gray-200 bg-white" />
  </aside>
);

/* ---------- generate dialog ---------- */

const GenerateDialog = () => (
  <div
    role="dialog"
    aria-label="Generar"
    className="absolute left-[154px] top-[149px] w-[180px] border-2 border-[#bd1f1c] bg-[#f0f0f0] shadow-md"
  >
    <div className="flex h-[12px] items-center bg-[#bd1f1c] text-white">
      <h2 className="flex-1 text-center leading-[12px]">Generar</h2>
      <button aria-label="Cerrar" className="pr-[9px]">
        <X className="size-[6px]" strokeWidth={3} />
      </button>
    </div>
    <div className="flex flex-col gap-[2px] px-[5px] pt-[4px]">
      <Tick label="Analizar el modelo y generar uniones nuevas si procede" />
      <Tick label="Agrupar las uniones generadas si es posible" />
      <hr className="mt-px border-gray-300" />
      <Tick label="Definir uniones automáticamente" />
      <span className="relative mt-px flex items-center">
        <select aria-label="Origen de las uniones" className="h-[12px] w-full appearance-none border border-[#555] bg-white pl-[3px]">
          <option>A partir de la biblioteca de uniones y de las uniones predefinidas</option>
        </select>
        <ChevronDown className="pointer-events-none absolute right-[3px] size-[5px]" strokeWidth={3} />
      </span>
    </div>
    <div className="mt-[4px] flex justify-between border-t border-gray-300 px-[3px] py-[3px]">
      <button className="h-[11px] w-[32px] border border-[#0078d7] bg-[#e5f1fb]">Aceptar</button>
      <button className="h-[11px] w-[30px] border border-gray-400 bg-[#e1e1e1]">Cancelar</button>
    </div>
  </div>
);

const Pointer = () => (
  <svg viewBox="200 56 44 94" className="pointer-events-none absolute left-[200px] top-[56px] h-[94px] w-[44px]" fill="none">
    <path d="M232 57C214 76 205 86 208 101C211 119 221 130 234 144" stroke="#c8202f" strokeWidth="1.5" />
    <path d="M239 148l-9-4 5-5z" fill="#c8202f" />
  </svg>
);

const App = () => {
  return (
    <div className="relative flex min-h-screen flex-col bg-[#f0f0f0] font-['Open_Sans','Noto_Sans',sans-serif] text-[5px] leading-[7px] text-[#222]">
      <TitleBar />
      <Ribbon />
      <div className="flex flex-1">
        <LeftSide />
        <div className="flex w-[4px] shrink-0 items-center justify-center">
          <span className="h-[5px] w-px bg-gray-400" />
        </div>
        <Workspace />
        <div className="flex w-[4px] shrink-0 items-center justify-center">
          <span className="h-[5px] w-px bg-gray-400" />
        </div>
        <Joints />
      </div>
      <footer className="flex h-[9px] shrink-0 items-center gap-[3px] border-t border-gray-200 pl-[3px]">
        <Info className="size-[7px] text-white" fill="#1a8ac4" strokeWidth={3} />
        Introducción - Generar
      </footer>
      <Pointer />
      <GenerateDialog />
    </div>
  );
};

export default App;
